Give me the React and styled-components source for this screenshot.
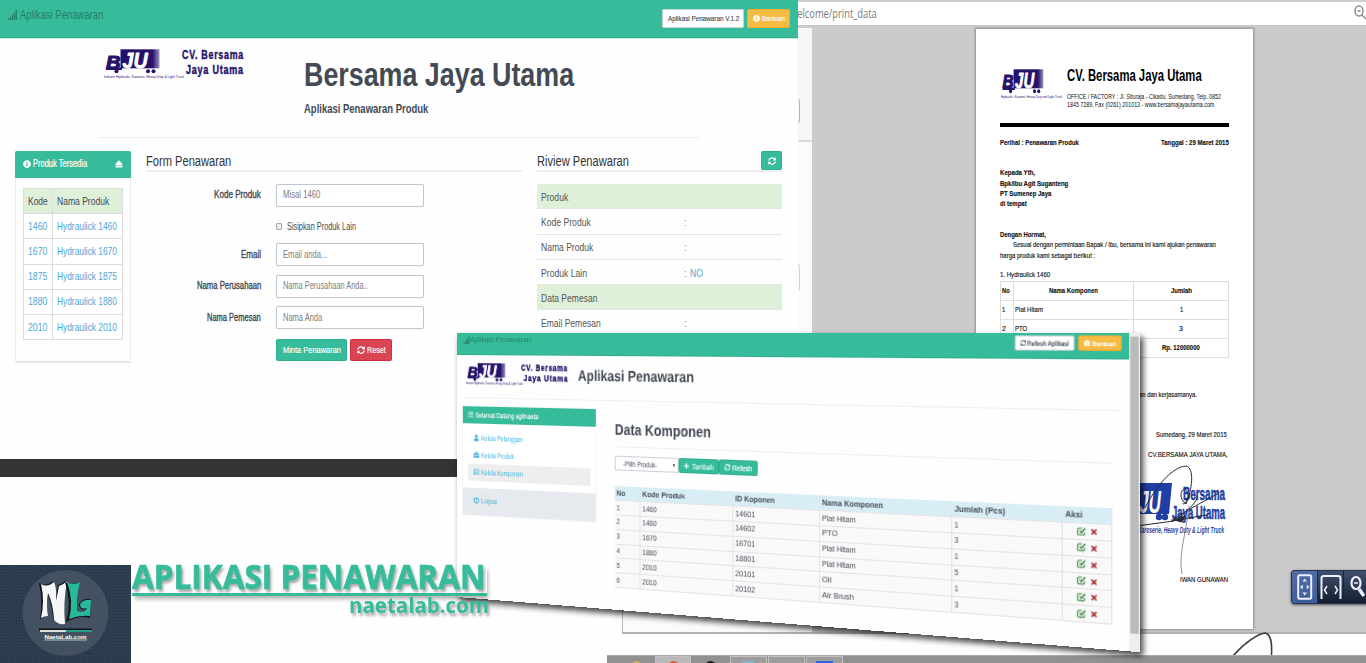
import React, { useLayoutEffect, useRef, useState } from "react";
import styled, { createGlobalStyle, css } from "styled-components";
import {
  FaInfoCircle,
  FaEject,
  FaSyncAlt,
  FaUser,
  FaBriefcase,
  FaRegListAlt,
  FaPowerOff,
  FaPlus,
  FaTasks,
  FaTimes,
} from "react-icons/fa";

const green = "#37bc9b";
const navy = "#26116b";

const Global = createGlobalStyle`
  * { box-sizing: border-box; }
  body { margin: 0; background: #fefefe; overflow: hidden; }
`;

/* Text condensed or widened to a given width */
const FitBox = styled.span`
  display: inline-block;
  flex: none;
  width: ${(p) => p.$w}px;
  white-space: nowrap;
`;
const FitInner = styled.span`
  display: inline-block;
  transform-origin: 0 50%;
`;
function Fit({ w, children, className }) {
  const ref = useRef(null);
  const [scale, setScale] = useState(1);
  useLayoutEffect(() => {
    const natural = ref.current.offsetWidth;
    if (natural) setScale(w / natural);
  }, [w, children]);
  return (
    <FitBox $w={w} className={className}>
      <FitInner ref={ref} style={{ transform: `scaleX(${scale})` }}>
        {children}
      </FitInner>
    </FitBox>
  );
}

const Stage = styled.main`
  position: relative;
  width: 1366px;
  height: 663px;
  overflow: hidden;
  background: #fefefe;
  font-family: "Liberation Sans", Arial, sans-serif;
  font-size: 11px;
  line-height: 1;
  color: #434a54;
`;

/* ---------- small drawings ---------- */
const SignalBars = ({ size }) => (
  <svg width={size} height={size * 1.15} viewBox="0 0 10 12" preserveAspectRatio="none" fill="currentColor">
    <path d="M0 10h1.500v2H0zM2.100 8.500h1.500V12H2.100zM4.200 6h1.500v6H4.200zM6.300 3h1.500v9H6.300zM8.400 0H10v12H8.400z" />
  </svg>
);
const EditMark = () => (
  <svg width="7.5" height="7.5" viewBox="0 0 16 16" fill="none" stroke="#3c8a45">
    <path d="M9 2H4Q1.500 2 1.500 4.500V12Q1.500 14.500 4 14.500H11Q13.500 14.500 13.500 12V9" strokeWidth="2" />
    <path d="M5.500 7L8 10L15 2" strokeWidth="2.800" />
  </svg>
);

/* ---------- logo ---------- */
const LogoSvg = styled.svg`
  display: block;
  flex: none;
  overflow: visible;
`;
function BjuLogo({ width, height, id, tagline }) {
  return (
    <LogoSvg width={width} height={height} viewBox="0 0 80 31" preserveAspectRatio="none">
      <defs>
        <linearGradient id={id} x1="0" x2="1">
          <stop offset="0.82" stopColor={navy} />
          <stop offset="1" stopColor={navy} stopOpacity="0.45" />
        </linearGradient>
      </defs>
      <rect x="16.5" y="1.3" width="39" height="19" fill={`url(#${id})`} />
      <path d="M2.5 19.5H18V22H2z" fill={navy} />
      <text x="2" y="20.5" fontSize="19" fontWeight="bold" fontStyle="italic" textLength="14.5" lengthAdjust="spacingAndGlyphs" fill={navy} stroke={navy} strokeWidth="1.2">B</text>
      <text x="18.5" y="20" fontSize="22" fontWeight="bold" fontStyle="italic" textLength="25" lengthAdjust="spacingAndGlyphs" fill="#fff" stroke="#fff" strokeWidth=".8">JU</text>
      <g fill={navy}>
        <circle cx="12.5" cy="23.2" r="2" />
        <circle cx="44" cy="23.2" r="2" />
        <circle cx="49.5" cy="23.2" r="2" />
      </g>
      <text x="0" y="30" fontSize="3.6" textLength="80" lengthAdjust="spacingAndGlyphs" fill={navy}>{tagline}</text>
    </LogoSvg>
  );
}

const CompanyName = styled.div`
  display: flex;
  flex-direction: column;
  align-items: flex-end;
  margin-left: -2px;
  font-weight: bold;
  font-size: ${(p) => p.$size}px;
  line-height: ${(p) => p.$lh}px;
  letter-spacing: 1px;
  color: ${navy};
  -webkit-text-stroke: 0.4px ${navy};
`;

/* ---------- print preview browser ---------- */
const PrintBrowser = styled.section`
  position: absolute;
  left: 622px;
  top: 0;
  width: 744px;
  height: 634px;
  display: flex;
  flex-direction: column;
  border-bottom: 2px solid #b2b2b2;
  border-left: 1px solid #b9b9b9;
  background: #cbcbcb;
`;
const UrlBar = styled.header`
  height: 28px;
  flex: none;
  display: flex;
  align-items: center;
  justify-content: space-between;
  padding: 0 0 2px 167px;
  border-top: 2px solid #cdcdcd;
  border-bottom: 3px solid #cacaca;
  background: #fff;
  color: #7b7b7b;
  font: 13px "Open Sans", sans-serif;
`;
const PreviewBody = styled.div`
  flex: 1;
  display: flex;
  min-height: 0;
`;
const PreviewOptions = styled.aside`
  width: 189px;
  display: flex;
  flex-direction: column;
  background: #fbfbfb;
`;
const OptionsHead = styled.div`
  width: 100%;
  height: 114px;
  padding: 71px 12px 0;
  border-bottom: 2px solid #dcdcdc;
  background: #f6f6f6;
`;
const OptionBox = styled.div`
  height: ${(p) => p.$h}px;
  margin: ${(p) => p.$m || 0};
  border: 1px solid ${(p) => p.$c || "#b5b5b5"};
  border-radius: 2px;
`;
const Sheet = styled.article`
  width: 277px;
  height: 600px;
  margin: 1px 0 0 164px;
  padding: 39px 24px 0;
  background: #fff;
  box-shadow: 0 0 2px 1px #8f8f8f;
  font-size: 8px;
  color: #111;
`;
const Letterhead = styled.div`
  height: 59px;
  display: flex;
  gap: 5px;
  padding-left: 1px;
  border-bottom: 4px solid #000;
`;
const HeadText = styled.div`
  display: flex;
  flex-direction: column;
  line-height: 8px;
`;
const HeadTitle = styled.div`
  height: 26px;
  margin-top: -1px;
  padding-bottom: 1px;
  font-size: 17px;
  line-height: 18px;
  font-weight: bold;
  color: #000;
`;
const Line = styled.div`
  display: flex;
  justify-content: ${(p) => p.$justify || "flex-start"};
  align-items: center;
  height: 10.3px;
  margin-top: ${(p) => p.$mt || 0}px;
  padding-left: ${(p) => p.$indent || 0}px;
  padding-right: ${(p) => p.$end || 0}px;
  font-weight: ${(p) => (p.$bold ? "bold" : "normal")};
  -webkit-text-stroke: 0.15px #111;
`;
const LetterTable = styled.div`
  display: grid;
  grid-template-columns: 13px 120px 95px;
  grid-template-rows: 18.5px 19px 19px 19px;
  margin-top: 1px;
  border: 1px solid #ddd;
  border-width: 1px 0 0 1px;
`;
const LetterCell = styled.div`
  display: flex;
  align-items: center;
  justify-content: ${(p) => (p.$center ? "center" : "flex-start")};
  padding-left: ${(p) => (p.$center ? 0 : 1)}px;
  border: 1px solid #ddd;
  border-width: 0 1px 1px 0;
  font-weight: ${(p) => (p.$bold ? "bold" : "normal")};
  grid-column: span ${(p) => p.$span || 1};
  -webkit-text-stroke: 0.15px #111;
`;
const Stamp = styled.svg`
  display: block;
  margin: 5px 0 0 132px;
  overflow: visible;
`;
const PdfTools = styled.div`
  position: absolute;
  left: 1291px;
  top: 570px;
  width: 80px;
  height: 34px;
  display: flex;
  border: 1px solid #26334e;
  border-radius: 3px;
  overflow: hidden;
  background: linear-gradient(#41506e, #141d30);
  box-shadow: 0 1px 3px rgba(0, 0, 0, 0.6);
`;
const PdfTool = styled.div`
  width: 26.5px;
  display: grid;
  place-items: center;
  border-right: 1px solid #1c263b;
  background: ${(p) => (p.$active ? "linear-gradient(#526ca3,#3e5d9c)" : "transparent")};
`;
const Scribble = styled.svg`
  position: absolute;
  left: 1230px;
  top: 630px;
`;

/* ---------- taskbar ---------- */
const Taskbar = styled.footer`
  position: absolute;
  left: 607px;
  top: 655px;
  width: 759px;
  height: 8px;
  display: flex;
  gap: 1px;
  padding-left: 12px;
  background: #919191;
  border-top: 1px solid #aaa;
`;
const Task = styled.div`
  width: ${(p) => p.$w || 37}px;
  height: 8px;
  display: flex;
  justify-content: center;
  padding-top: 4px;
  overflow: hidden;
  border: 1px solid ${(p) => (p.$on ? "#c0c0c0" : "transparent")};
  border-bottom: 0;
  background: ${(p) => (p.$on === 2 ? "#b9b9b9" : p.$on ? "#9d9d9d" : "transparent")};
`;
const TaskIcon = styled.i`
  width: ${(p) => p.$w}px;
  height: 12px;
  flex: none;
  border-radius: ${(p) => p.$r || 0};
  background: ${(p) => p.$c};
`;

/* ---------- order form window ---------- */
const FormWindow = styled.section`
  position: absolute;
  left: 0;
  top: 0;
  width: 798px;
  height: 477px;
  display: flex;
  flex-direction: column;
  background: #fefefe;
  border-bottom: 18px solid #333;
`;
const Navbar = styled.nav`
  height: 38px;
  flex: none;
  display: flex;
  align-items: center;
  justify-content: space-between;
  padding: 0 8px;
  background: ${green};
  border-bottom: 1px solid #2fae8e;
  box-shadow: 0 1px 0 #c7ebe1;
`;
const Brand = styled.div`
  display: flex;
  align-items: ${(p) => (p.$small ? "flex-start" : "center")};
  gap: ${(p) => (p.$small ? 1 : 3)}px;
  padding-top: ${(p) => (p.$small ? 1 : 0)}px;
  margin-bottom: ${(p) => (p.$small ? 0 : 7)}px;
  font-size: ${(p) => (p.$small ? 8 : 12)}px;
  color: #248069;
`;
const NavButtons = styled.div`
  display: flex;
  gap: 3px;
`;
const fills = {
  white: css`background: #fff; color: #434a54; border-color: #ccd1d9;`,
  amber: css`background: #f6bb42; color: #fff; border-color: #f0ad2e;`,
  green: css`background: ${green}; color: #fff; border-color: #2fae8e;`,
  red: css`background: #da4453; color: #fff; border-color: #d03040;`,
};
const Button = styled.div`
  display: flex;
  align-items: center;
  justify-content: center;
  gap: ${(p) => p.$gap ?? 2}px;
  width: ${(p) => p.$w}px;
  height: ${(p) => p.$h}px;
  font-size: ${(p) => p.$fs || 8}px;
  border: 1px solid;
  border-radius: 1.5px;
  -webkit-text-stroke: 0.15px currentColor;
  ${(p) => fills[p.$fill]}
`;
const Masthead = styled.header`
  height: 100px;
  flex: none;
  display: flex;
  width: 600px;
  margin-left: 99px;
  padding: 10px 0 0 5px;
  border-bottom: 1px solid #eee;
`;
const MastTitle = styled.div`
  margin-left: 60px;
  padding-top: 8px;
  font-weight: bold;
`;
const BigTitle = styled.h1`
  margin: 0;
  font-size: 34px;
  line-height: 36px;
`;
const SubTitle = styled.div`
  margin-top: 11px;
  font-size: 12px;
  line-height: 12px;
`;
const Columns = styled.div`
  display: flex;
  padding: 13px 16px 0 15px;
`;
const ProductPanel = styled.aside`
  width: 116px;
  height: 212px;
  border: 1px solid #eee;
  border-top: 0;
  border-bottom: 2px solid #e6e6e6;
  border-radius: 2px;
`;
const PanelHead = styled.div`
  display: flex;
  align-items: center;
  justify-content: space-between;
  height: 27px;
  margin: 0 -1px;
  padding: 0 8px 2px;
  background: ${green};
  border-radius: 2px 2px 0 0;
  color: #fff;
  font-size: 10px;
  -webkit-text-stroke: 0.2px #fff;
`;
const IconText = styled.span`
  display: flex;
  align-items: center;
  gap: ${(p) => p.$gap || 2}px;
`;
const ProductGrid = styled.div`
  display: grid;
  grid-template-columns: 29px 70px;
  grid-auto-rows: 25.2px;
  margin: 10px 0 0 7px;
  width: 100px;
  border: 1px solid #ddd;
  border-width: 1px 0 0 1px;
`;
const ProductCell = styled.div`
  display: flex;
  align-items: center;
  padding-left: 4px;
  border: 1px solid #ddd;
  border-width: 0 1px 1px 0;
  color: ${(p) => (p.$head ? "#434a54" : "#4fa5d6")};
  background: ${(p) => (p.$head ? "#dff0d8" : "#fff")};
`;
const SectionTitle = styled.div`
  display: flex;
  align-items: center;
  justify-content: space-between;
  height: 21px;
  border-bottom: 2px solid #efefef;
  font-size: 14px;
  color: #333;
`;
const FormColumn = styled.div`
  width: 376px;
  margin-left: 15px;
`;
const Field = styled.div`
  display: flex;
  align-items: center;
  height: 22px;
  margin-top: ${(p) => p.$mt}px;
  font-size: 10px;
`;
const Label = styled.div`
  width: 115px;
  display: flex;
  justify-content: flex-end;
  margin-right: 15px;
  -webkit-text-stroke: 0.35px #434a54;
`;
const Input = styled.div`
  width: 148px;
  height: 23px;
  display: flex;
  align-items: center;
  padding-left: 6px;
  border: 1px solid #c0c6d0;
  box-shadow: 0 0 1px #ccd1d9;
  border-radius: 2px;
  background: #fff;
  color: #7d7d7d;
`;
const Checkbox = styled.i`
  width: 6px;
  height: 7px;
  margin: 0 5px 0 0;
  border: 1px solid #aaa;
  border-radius: 1px;
  background: #eee;
`;
const ReviewColumn = styled.div`
  width: 245px;
  margin-left: 15px;
`;
const ReviewTable = styled.div`
  margin-top: 12px;
`;
const ReviewRow = styled.div`
  display: flex;
  align-items: center;
  height: 25.3px;
  padding: 2px 0 0 4px;
  border-bottom: 1px solid #e4e4e4;
  background: ${(p) => (p.$head ? "#dff0d8" : "transparent")};
  font-size: 10.5px;
  color: #555;
`;
const ReviewKey = styled.div`
  width: 143px;
`;
const Colon = styled.span`
  color: #999;
`;
const Accent = styled.span`
  color: #4fa5d6;
`;

/* ---------- component window, seen in perspective ---------- */
const TiltShadow = styled.div`
  position: absolute;
  left: 457px;
  top: 333px;
  width: 683px;
  height: 320px;
  filter: drop-shadow(3px 4px 3px rgba(0, 0, 0, 0.75));
`;
const TiltWindow = styled.section`
  width: 683px;
  height: 263.5px;
  display: flex;
  overflow: hidden;
  background: #fefefe;
  transform-origin: 0 0;
  transform: matrix3d(0.827, 0, 0, -0.00025329, 0, 1, 0, 0, 0, 0, 1, 0, 0, 0, 0, 1);
`;
const TiltPage = styled.div`
  width: 674px;
`;
const Scrollbar = styled.div`
  width: 9px;
  height: 263.5px;
  padding: 3px 1px 0;
  background: #eee;
`;
const Thumb = styled.div`
  height: 245.5px;
  background: #bababa;
`;
const TiltNav = styled.nav`
  display: flex;
  justify-content: space-between;
  height: 22px;
  padding: 2px 6px 0 8px;
  background: ${green};
  border-bottom: 1px solid #2fae8e;
`;
const TiltMast = styled.div`
  display: flex;
  width: 660px;
  height: 42.5px;
  margin-left: 7px;
  padding: 7px 0 0 4px;
  border-bottom: 1px solid #f0f0f0;
`;
const TiltHeading = styled.h2`
  margin: ${(p) => p.$m};
  font-size: ${(p) => p.$fs}px;
  line-height: 16px;
  font-weight: bold;
`;
const TiltColumns = styled.div`
  display: flex;
  padding: 8px 0 0 7px;
`;
const Sidebar = styled.aside`
  width: 154px;
  height: 108.5px;
  display: flex;
  flex-direction: column;
  background: #fff;
  box-shadow: 0 0 1px #ccc;
`;
const SideHead = styled.div`
  display: flex;
  align-items: center;
  gap: 2px;
  height: 17px;
  padding-left: 6px;
  background: ${green};
  color: #fff;
  font-size: 7px;
  -webkit-text-stroke: 0.2px #fff;
`;
const SideItem = styled.div`
  display: flex;
  align-items: center;
  gap: 2px;
  height: ${(p) => p.$h || 17}px;
  margin: ${(p) => p.$m || "0 6px"};
  padding: 0 0 ${(p) => p.$pb || 0}px ${(p) => p.$pl || 7}px;
  background: ${(p) => p.$bg || "transparent"};
  color: #3bafda;
  font-size: 7.5px;
`;
const TiltContent = styled.div`
  width: 479px;
  margin-left: 21px;
`;
const Rule = styled.div`
  height: 1px;
  background: #f0f0f0;
`;
const Actions = styled.div`
  display: flex;
  margin: 8.5px 0 15px;
`;
const Select = styled.div`
  display: flex;
  align-items: center;
  justify-content: space-between;
  width: 69px;
  height: 14px;
  padding: 0 3px 0 8px;
  border: 1px solid #ccd1d9;
  background: #fff;
  font-size: 7px;
`;
const Caret = styled.i`
  border: 1.8px solid transparent;
  border-top: 3px solid #222;
  border-bottom: 0;
`;
const PartsGrid = styled.div`
  display: grid;
  grid-template-columns: 27.5px 98px 87.5px 125px 98px 42px;
  grid-auto-rows: 13.9px;
`;
const PartCell = styled.div`
  display: flex;
  align-items: center;
  gap: 3px;
  padding-left: ${(p) => (p.$icons ? 12 : 2)}px;
  font-size: 7.5px;
  font-weight: ${(p) => (p.$head ? "bold" : "normal")};
  background: ${(p) => (p.$head ? "#d9edf7" : "#f9f9f9")};
  border: 1px solid #e4e4e4;
  border-width: 0 1px 1px 0;
`;

/* ---------- banner ---------- */
const Badge = styled.div`
  position: absolute;
  left: 0;
  top: 565px;
  width: 131px;
  height: 98px;
  background-color: #2d3e50;
  background-image: radial-gradient(rgba(20, 30, 42, 0.35) 30%, transparent 35%);
  background-size: 3px 3px;
`;
const Banner = styled.div`
  position: absolute;
  left: 132px;
  top: 565px;
  width: 357px;
  display: flex;
  flex-direction: column;
  font-family: "Open Sans", sans-serif;
  font-weight: 700;
  color: ${green};
  text-shadow: 2px 3px 3px rgba(0, 0, 0, 0.35);
`;
const BannerTitle = styled.div`
  width: 355px;
  height: 31px;
  font-size: 34px;
  line-height: 22px;
  -webkit-text-stroke: 0.7px ${green};
  border-bottom: 3px solid ${green};
  box-shadow: 2px 4px 4px -1px rgba(0, 0, 0, 0.3);
`;
const BannerSite = styled.div`
  align-self: flex-end;
  font-size: 21.5px;
  line-height: 18px;
`;

const products = [["1460", 19], ["1670", 19], ["1875", 19], ["1880", 19], ["2010", 19]];
const fields = [
  ["Email", 20, "Email anda...", 44, 6],
  ["Nama Perusahaan", 64, "Nama Perusahaan Anda..", 85, 9.5],
  ["Nama Pemesan", 54, "Nama Anda", 39, 9.5],
];
const review = [
  ["Produk", 27, true],
  ["Kode Produk", 50],
  ["Nama Produk", 52],
  ["Produk Lain", 46, false, "NO"],
  ["Data Pemesan", 56, true],
  ["Email Pemesan", 60],
];
const heads = [["No", 9.5], ["Kode Produk", 46], ["ID Koponen", 40], ["Nama Komponen", 59], ["Jumlah (Pcs)", 46], ["Aksi", 15]];
const parts = [
  ["1", "1460", "14601", "Plat Hitam", 33, "1"],
  ["2", "1460", "14602", "PTO", 15, "3"],
  ["3", "1670", "16701", "Plat Hitam", 33, "1"],
  ["4", "1880", "18801", "Plat Hitam", 33, "5"],
  ["5", "2010", "20101", "Oil", 9, "1"],
  ["6", "2010", "20102", "Air Brush", 31, "3"],
];

function PrintPreview() {
  return (
    <>
      <PrintBrowser>
        <UrlBar>
          <Fit w={87}>welcome/print_data</Fit>
          <svg width="12" height="15" viewBox="0 0 12 15" fill="none" stroke="#8a8a8a" strokeWidth="1.5">
            <ellipse cx="5" cy="6" rx="4" ry="5" />
            <path d="M3.500 6h3M8 10l4 4" />
          </svg>
        </UrlBar>
        <PreviewBody>
          <PreviewOptions>
            <OptionsHead><OptionBox $h={24} /></OptionsHead>
            <OptionBox $h={27} $c="#d2d2d2" $m="122px 12px 0" />
          </PreviewOptions>
          <Sheet>
            <Letterhead>
              <BjuLogo width={61} height={31} id="letterBody" tagline="Hydraulic, Karoseri, Heavy Duty and Light Truck" />
              <HeadText>
                <HeadTitle><Fit w={135}>CV. Bersama Jaya Utama</Fit></HeadTitle>
                <Fit w={154}>OFFICE / FACTORY : Jl. Situraja - Cikadu. Sumedang, Telp. 0852</Fit>
                <Fit w={147}>1845 7289, Fax (0261) 201013 - www.bersamajayautama.com</Fit>
              </HeadText>
            </Letterhead>
            <Line $mt={10.5} $bold $justify="space-between">
              <Fit w={79}>Perihal : Penawaran Produk</Fit>
              <Fit w={68}>Tanggal : 29 Maret 2015</Fit>
            </Line>
            <Line $mt={20.5} $bold><Fit w={35}>Kepada Yth,</Fit></Line>
            <Line $bold><Fit w={68}>Bpk/Ibu Agit Suganteng</Fit></Line>
            <Line $bold><Fit w={51}>PT Sumenep Jaya</Fit></Line>
            <Line $bold><Fit w={27}>di tempat</Fit></Line>
            <Line $mt={20.5} $bold><Fit w={46}>Dengan Hormat,</Fit></Line>
            <Line $indent={13}><Fit w={203}>Sesuai dengan permintaan Bapak / Ibu, bersama ini kami ajukan penawaran</Fit></Line>
            <Line><Fit w={95}>harga produk kami sebagai berikut :</Fit></Line>
            <Line $mt={9}><Fit w={50}>1. Hydraulick 1460</Fit></Line>
            <LetterTable>
              <LetterCell $bold><Fit w={8}>No</Fit></LetterCell>
              <LetterCell $bold $center><Fit w={49}>Nama Komponen</Fit></LetterCell>
              <LetterCell $bold $center><Fit w={21}>Jumlah</Fit></LetterCell>
              <LetterCell><Fit w={3}>1</Fit></LetterCell>
              <LetterCell><Fit w={28}>Plat Hitam</Fit></LetterCell>
              <LetterCell $center><Fit w={3}>1</Fit></LetterCell>
              <LetterCell><Fit w={3.5}>2</Fit></LetterCell>
              <LetterCell><Fit w={12}>PTO</Fit></LetterCell>
              <LetterCell $center><Fit w={3.5}>3</Fit></LetterCell>
              <LetterCell $span={2} />
              <LetterCell $bold $center><Fit w={38}>Rp. 12000000</Fit></LetterCell>
            </LetterTable>
            <Line $mt={32} $justify="flex-end" $end={32}><Fit w={58}>an dan kerjasamanya.</Fit></Line>
            <Line $mt={30} $justify="flex-end" $end={2}><Fit w={71}>Sumedang, 29 Maret 2015</Fit></Line>
            <Line $mt={10} $justify="flex-end" $end={1}><Fit w={80}>CV.BERSAMA JAYA UTAMA,</Fit></Line>
            <Stamp width="94" height="110" viewBox="0 0 94 110">
              <g fill="#1f3fa4" fontWeight="bold">
                <path d="M0 17H40L37 48H0z" />
                <text x="7" y="47" fill="#fff" fontSize="32" fontStyle="italic" textLength="22" lengthAdjust="spacingAndGlyphs">JU</text>
                <circle cx="27" cy="51" r="3.2" /><circle cx="33" cy="51" r="3.2" />
                <g stroke="#1f3fa4" strokeWidth=".6">
                  <text x="51" y="34" fontSize="19" textLength="42" lengthAdjust="spacingAndGlyphs">Bersama</text>
                  <text x="40" y="52.5" fontSize="19" textLength="53" lengthAdjust="spacingAndGlyphs">Jaya Utama</text>
                </g>
                <text x="6" y="67" fontSize="9.5" fontStyle="italic" textLength="86" lengthAdjust="spacingAndGlyphs">Karoserie, Heavy Duty &amp; Light Truck</text>
              </g>
              <g fill="none" stroke="#282838" strokeWidth="1">
                <path d="M13 42C24 20 40 1 54 0C63 2 60 24 54 38C45 32 50 20 54 24C60 28 51 42 51 37M62 30C73 28 51 52 40 55C48 48 65 39 87 27M39 54C50 55 62 50 76 49M4 60L42 55" />
                <path d="M57 40C54 68 46 90 50 108" stroke="#777" strokeWidth=".8" />
                <path d="M42 54L53 50L50 56z" fill="#282838" />
              </g>
            </Stamp>
            <Line $mt={-0.5} $justify="flex-end" $end={1}><Fit w={48}>IWAN GUNAWAN</Fit></Line>
          </Sheet>
        </PreviewBody>
      </PrintBrowser>
      <PdfTools>
        <PdfTool $active>
          <svg width="16" height="26" viewBox="0 0 16 26">
            <rect x="1.2" y="1.2" width="13" height="23.5" rx="1.5" fill="none" stroke="#eef" strokeWidth="2" />
            <path d="M7.7 4.500l2.300 3h-4.600zM7.700 21.500l2.300-3h-4.600zM3 13l2.800-2.500v5zM12.500 13l-2.800-2.500v5z" fill="#dfe7fa" />
          </svg>
        </PdfTool>
        <PdfTool>
          <svg width="22" height="26" viewBox="0 0 22 26" fill="none" stroke="#eef">
            <path d="M1.5 25V4Q1.5 2 4 2H18Q20.500 2 20.500 4V25" strokeWidth="2" />
            <path d="M7 12l-2.500 4 2.500 4M15 12l2.500 4-2.500 4" strokeWidth="1.5" />
          </svg>
        </PdfTool>
        <PdfTool>
          <svg width="16" height="24" viewBox="0 0 16 24" fill="none" stroke="#eef">
            <ellipse cx="7" cy="8" rx="4.500" ry="6" strokeWidth="2.200" />
            <path d="M5 8h4" strokeWidth="1.500" /><path d="M10 14l5 7" strokeWidth="3.500" />
          </svg>
        </PdfTool>
      </PdfTools>
      <Scribble width="50" height="26" viewBox="0 0 50 26">
        <path d="M3 26C15 12 28 4 35 3C42 4 42 16 41.500 26" fill="none" stroke="#3c3840" strokeWidth="1.5" />
      </Scribble>
    </>
  );
}

function OrderForm() {
  return (
    <FormWindow>
      <Navbar>
        <Brand><SignalBars size={9} /><Fit w={83}>Aplikasi Penawaran</Fit></Brand>
        <NavButtons>
          <Button $fill="white" $w={82} $h={19}><Fit w={71}>Aplikasi Penawaran V.1.2</Fit></Button>
          <Button $fill="amber" $w={43} $h={19}><FaInfoCircle size={7} /><Fit w={23}>Bantuan</Fit></Button>
        </NavButtons>
      </Navbar>
      <Masthead>
        <BjuLogo width={80} height={31} id="formBody" tagline="Industri Hydraulic, Karoseri, Heavy Duty & Light Truck" />
        <CompanyName $size={12} $lh={14.5}>
          <Fit w={62}>CV. Bersama</Fit>
          <Fit w={58}>Jaya Utama</Fit>
        </CompanyName>
        <MastTitle>
          <BigTitle><Fit w={270}>Bersama Jaya Utama</Fit></BigTitle>
          <SubTitle><Fit w={124}>Aplikasi Penawaran Produk</Fit></SubTitle>
        </MastTitle>
      </Masthead>
      <Columns>
        <ProductPanel>
          <PanelHead>
            <IconText><FaInfoCircle size={8} /><Fit w={54}>Produk Tersedia</Fit></IconText>
            <FaEject size={8} />
          </PanelHead>
          <ProductGrid>
            <ProductCell $head><Fit w={20}>Kode</Fit></ProductCell>
            <ProductCell $head><Fit w={52}>Nama Produk</Fit></ProductCell>
            {products.map(([code, w]) => (
              <React.Fragment key={code}>
                <ProductCell><Fit w={w}>{code}</Fit></ProductCell>
                <ProductCell><Fit w={60}>{`Hydraulick ${code}`}</Fit></ProductCell>
              </React.Fragment>
            ))}
          </ProductGrid>
        </ProductPanel>
        <FormColumn>
          <SectionTitle><Fit w={85}>Form Penawaran</Fit></SectionTitle>
          <Field $mt={12}>
            <Label><Fit w={47}>Kode Produk</Fit></Label>
            <Input><Fit w={37}>Misal 1460</Fit></Input>
          </Field>
          <Field $mt={9.5}>
            <Label />
            <Checkbox /><Fit w={69}>Sisipkan Produk Lain</Fit>
          </Field>
          {fields.map(([label, lw, hint, hw, mt]) => (
            <Field key={label} $mt={mt}>
              <Label><Fit w={lw}>{label}</Fit></Label>
              <Input><Fit w={hw}>{hint}</Fit></Input>
            </Field>
          ))}
          <Field $mt={10}>
            <Label />
            <NavButtons>
              <Button $fill="green" $w={71} $h={22} $fs={9.5}><Fit w={58}>Minta Penawaran</Fit></Button>
              <Button $fill="red" $w={42} $h={22} $fs={9.5}><FaSyncAlt size={8} /><Fit w={19}>Reset</Fit></Button>
            </NavButtons>
          </Field>
        </FormColumn>
        <ReviewColumn>
          <SectionTitle>
            <Fit w={92}>Riview Penawaran</Fit>
            <Button $fill="green" $w={21} $h={19}><FaSyncAlt size={8} /></Button>
          </SectionTitle>
          <ReviewTable>
            {review.map(([name, w, head, value]) => (
              <ReviewRow key={name} $head={head}>
                <ReviewKey><Fit w={w}>{name}</Fit></ReviewKey>
                {!head && <Colon>:</Colon>}
                {value && <Accent>&nbsp;<Fit w={13}>{value}</Fit></Accent>}
              </ReviewRow>
            ))}
          </ReviewTable>
        </ReviewColumn>
      </Columns>
    </FormWindow>
  );
}

function ComponentWindow() {
  return (
    <TiltShadow>
      <TiltWindow>
        <TiltPage>
          <TiltNav>
            <Brand $small><SignalBars size={7} /><Fit w={71}>Aplikasi Penawaran</Fit></Brand>
            <NavButtons>
              <Button $fill="white" $w={52.5} $h={13} $fs={6} $gap={1.500}><FaSyncAlt size={5} /><Fit w={36}>Refesh Aplikasi</Fit></Button>
              <Button $fill="amber" $w={37} $h={13} $fs={6}><FaInfoCircle size={5.500} /><Fit w={20}>Bantuan</Fit></Button>
            </NavButtons>
          </TiltNav>
          <TiltMast>
            <BjuLogo width={67} height={23} id="tiltBody" tagline="Industri Hydraulic, Karoseri, Heavy Duty & Light Truck" />
            <CompanyName $size={8.500} $lh={10}>
              <Fit w={54}>CV. Bersama</Fit>
              <Fit w={51}>Jaya Utama</Fit>
            </CompanyName>
            <TiltHeading $fs={14.500} $m="3.5px 0 0 11px"><Fit w={126}>Aplikasi Penawaran</Fit></TiltHeading>
          </TiltMast>
          <TiltColumns>
            <Sidebar>
              <SideHead><FaTasks size={6.500} /><Fit w={74}>Selamat Datang agitnaeta</Fit></SideHead>
              <SideItem $m="6.5px 6px 0"><FaUser size={6.500} /><Fit w={49}>Kelola Pelanggan</Fit></SideItem>
              <SideItem><FaBriefcase size={6.500} /><Fit w={39}>Kelola Produk</Fit></SideItem>
              <SideItem $bg="#eeeeee"><FaRegListAlt size={6.500} /><Fit w={49}>Kelola Komponen</Fit></SideItem>
              <SideItem $bg="#e6e9ed" $m="7px 0 0" $h={27} $pl={13} $pb={2}><FaPowerOff size={6.500} /><Fit w={19}>Logout</Fit></SideItem>
            </Sidebar>
            <TiltContent>
              <TiltHeading $fs={15} $m="11.5px 0 7.5px"><Fit w={103}>Data Komponen</Fit></TiltHeading>
              <Rule />
              <Actions>
                <Select><Fit w={37}>-Pilih Produk-</Fit><Caret /></Select>
                <Button $fill="green" $w={42} $h={14} $fs={7}><FaPlus size={6.500} /><Fit w={23}>Tambah</Fit></Button>
                <Button $fill="green" $w={40} $h={14} $fs={7}><FaSyncAlt size={6} /><Fit w={20}>Refesh</Fit></Button>
              </Actions>
              <PartsGrid>
                {heads.map(([name, w]) => (
                  <PartCell key={name} $head><Fit w={w}>{name}</Fit></PartCell>
                ))}
                {parts.map(([no, code, id, name, w, qty]) => (
                  <React.Fragment key={no}>
                    <PartCell><Fit w={3.500}>{no}</Fit></PartCell>
                    <PartCell><Fit w={16}>{code}</Fit></PartCell>
                    <PartCell><Fit w={20.500}>{id}</Fit></PartCell>
                    <PartCell><Fit w={w}>{name}</Fit></PartCell>
                    <PartCell><Fit w={3.500}>{qty}</Fit></PartCell>
                    <PartCell $icons><EditMark /><FaTimes size={7} color="#a02622" /></PartCell>
                  </React.Fragment>
                ))}
              </PartsGrid>
            </TiltContent>
          </TiltColumns>
        </TiltPage>
        <Scrollbar><Thumb /></Scrollbar>
      </TiltWindow>
    </TiltShadow>
  );
}

function BrandBanner() {
  return (
    <>
      <Badge>
        <svg width="131" height="98" viewBox="0 0 131 98">
          <circle cx="65.500" cy="48" r="43" fill="#435160" />
          <path d="M39 18Q46 22 53 16Q56 22 56 31L58 20Q62 19 67 15Q63 34 64 58Q57 59 53 54Q52 40 48 30Q46 40 48 50Q43 51 40 55Q43 35 39 18z" fill="#10151c" />
          <path d="M41 19Q47 23 54 17Q57 24 56 36L59 21Q63 20 67 16Q63 38 65 59Q58 60 54 55Q53 38 48 28Q46 40 48 51Q44 51 41 53Q45 36 41 19z" fill="#f6f6f6" />
          <path d="M65 17Q72 21 79 17Q75 32 76 46Q82 50 86 44Q79 46 79 39Q83 33 91 34L90 53Q79 50 66 57Q72 38 65 17z" fill="#10151c" />
          <path d="M67 17Q73 21 80 17Q76 32 77 46Q84 49 87 43Q80 45 80 39Q84 34 91 35L90 51Q79 50 69 54Q74 36 67 17z" fill="#27b99a" />
          <path d="M39 64.500H92" stroke="#10151c" strokeWidth="2" />
          <path d="M40 66H66" stroke="#ddd" strokeWidth="2" /><path d="M66 66H92" stroke="#1f9f85" strokeWidth="2" />
          <text x="44.500" y="73.5" fontSize="6" fontWeight="bold" fill="#fff" textLength="42" lengthAdjust="spacingAndGlyphs">NaetaLab.com</text>
          <path d="M44.500 75H87" stroke="#cfe" strokeWidth="0.700" />
        </svg>
      </Badge>
      <Banner>
        <BannerTitle><Fit w={354}>APLIKASI PENAWARAN</Fit></BannerTitle>
        <BannerSite><Fit w={140}>naetalab.com</Fit></BannerSite>
      </Banner>
    </>
  );
}

export default function App() {
  return (
    <Stage>
      <Global />
      <PrintPreview />
      <Taskbar>
        <Task $w={35}><TaskIcon $w={9} $c="#c9b65a" $r="5px" /></Task>
        <Task $w={36} $on={2}><TaskIcon $w={11} $c="#e8523c" $r="6px" /></Task>
        <Task><TaskIcon $w={11} $c="#1b1b1b" $r="6px" /></Task>
        <Task $on={1}><TaskIcon $w={11} $c="#7fb8cc" /></Task>
        <Task $on={1} />
        <Task $on={1}><TaskIcon $w={17} $c="#2767cf" /></Task>
      </Taskbar>
      <OrderForm />
      <ComponentWindow />
      <BrandBanner />
    </Stage>
  );
}
